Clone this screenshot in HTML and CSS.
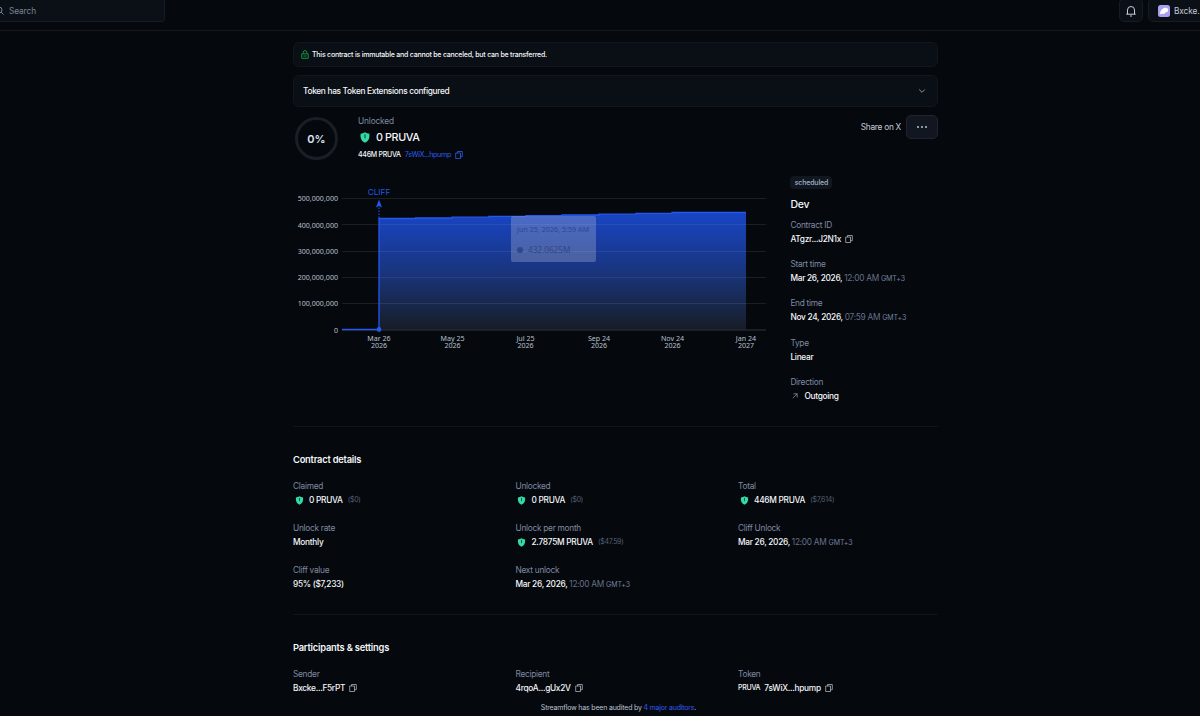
FILE: index.html
```html
<!DOCTYPE html>
<html lang="en">

<head>
    <meta charset="UTF-8">
    <meta name="viewport" content="width=device-width, initial-scale=1.0">
    <title>Streamflow - Contract</title>
    <link rel="stylesheet" href="styles.css">
</head>

<body>
    <!-- Shared icons -->
    <svg class="sprite">
        <symbol id="copy" viewBox="0 0 8 8">
            <path d="M2.500 2V.5h4.800v5.200H5.500M.7 2h4.800v5.500H.7z" fill="none" stroke="currentColor" stroke-width=".8" stroke-linejoin="round" />
        </symbol>
        <symbol id="token" viewBox="0 0 10 11">
            <path d="M5 .3C6.200 1.200 7.800 1.600 9.400 1.700 9.800 5.800 8.800 9 5 10.700 1.200 9 .2 5.800.6 1.700 2.200 1.600 3.800 1.200 5 .3z" fill="#35d9a5" />
            <path d="M5 2.300v4" fill="none" stroke="#0b5a48" stroke-width="1.200" />
        </symbol>
    </svg>

    <header class="topbar">
        <div class="search">
            <svg class="search-icon" viewBox="0 0 9 9"><circle cx="4" cy="4" r="3" /><path d="M6.200 6.200 8.500 8.500" /></svg>
            <span>Search</span>
        </div>
        <div class="topbar-right">
            <div class="bell">
                <svg viewBox="0 0 12 12"><path d="M1.300 9.200h9.400M2.500 9V5a3.500 3.500 0 0 1 7 0v4M5 11h2" /></svg>
            </div>
            <div class="wallet">
                <svg viewBox="0 0 12 12"><rect width="12" height="12" rx="2.500" fill="#ab9ff2" /><path d="M2 8.300C2.500 5 5 2.700 7.500 2.700c1.800 0 2.800 1.200 2.600 2.600C9.900 7 8.600 7.600 7.300 7.500 6.500 9 4.800 9.700 4.300 8.500 3.500 9.300 2 9.500 2 8.300z" fill="#fff" /></svg>
                <span>Bxcke...</span>
            </div>
        </div>
    </header>

    <main>
        <div class="notice">
            <svg viewBox="0 0 8 9"><path d="M.8 3.800h6.400v4.500H.8zM2.200 3.600V2.400a1.800 1.800 0 0 1 3.600 0v1.200M2.500 6h3" /></svg>
            <span>This contract is immutable and cannot be canceled, but can be transferred.</span>
        </div>
        <div class="accordion">
            <span>Token has Token Extensions configured</span>
            <svg viewBox="0 0 8 6"><path d="M1.200 1.500 4 4.300 6.800 1.500" /></svg>
        </div>

        <section class="summary">
            <div class="ring">0%</div>
            <div class="summary-text">
                <div class="label">Unlocked</div>
                <div class="amount"><svg><use href="#token" /></svg>0 PRUVA</div>
                <div class="supply"><span>446M PRUVA</span><a class="link">7sWiX...hpump</a><svg class="copy link"><use href="#copy" /></svg></div>
            </div>
            <div class="share">Share on X</div>
            <div class="more"><i></i><i></i><i></i></div>
        </section>

        <section class="overview">
            <div class="chart">
                <svg width="485" height="175" viewBox="293 180 485 175">
                    <defs>
                        <linearGradient id="area" x1="0" y1="0" x2="0" y2="1">
                            <stop offset="0" stop-color="#1845c4" />
                            <stop offset=".5" stop-color="#19357f" />
                            <stop offset="1" stop-color="#171d27" />
                        </linearGradient>
                    </defs>
                    <path d="M379 218.500H415.500V218H452V217.200H489V216.400H526V215.700H562V215H599V214.200H636V213.400H672V212.500H746V329.500H379z" fill="url(#area)" />
                    <path class="grid" d="M342 198.500H766M342 224.500H766M342 251.500H766M342 277.500H766M342 303.500H766" />
                    <path class="axis" d="M342 330H766" />
                    <path class="line" d="M342 329.500H379V218.500H415.500V218H452V217.200H489V216.400H526V215.700H562V215H599V214.200H636V213.400H672V212.500H746" />
                    <path class="cliff" d="M379 218V206" />
                    <path d="M379 199.500 382 207.500 379 206 376 207.500z" fill="#2458ee" />
                    <circle cx="379" cy="329.500" r="2.400" fill="#2458ee" />
                    <text class="cliff-label" x="379" y="195">CLIFF</text>
                    <g class="y-labels">
                        <text x="338" y="201.200">500,000,000</text>
                        <text x="338" y="227.700">400,000,000</text>
                        <text x="338" y="253.900">300,000,000</text>
                        <text x="338" y="280.100">200,000,000</text>
                        <text x="338" y="306.300">100,000,000</text>
                        <text x="338" y="332.500">0</text>
                    </g>
                    <g class="x-labels">
                        <text x="379" y="341">Mar 26</text><text x="379" y="347.500">2026</text>
                        <text x="452.500" y="341">May 25</text><text x="452.500" y="347.500">2026</text>
                        <text x="525.500" y="341">Jul 25</text><text x="525.500" y="347.500">2026</text>
                        <text x="599" y="341">Sep 24</text><text x="599" y="347.500">2026</text>
                        <text x="672.500" y="341">Nov 24</text><text x="672.500" y="347.500">2026</text>
                        <text x="746" y="341">Jan 24</text><text x="746" y="347.500">2027</text>
                    </g>
                </svg>
                <div class="tooltip">
                    <div>Jun 25, 2026, 5:59 AM</div>
                    <div class="tooltip-value"><i></i>432.0625M</div>
                </div>
            </div>
            <aside>
                <span class="badge">scheduled</span>
                <h1>Dev</h1>
                <div class="field"><div class="label">Contract ID</div><div class="value">ATgzr...J2N1x<svg class="copy"><use href="#copy" /></svg></div></div>
                <div class="field"><div class="label">Start time</div><div class="value">Mar 26, 2026, <span class="time">12:00 AM <small>GMT+3</small></span></div></div>
                <div class="field"><div class="label">End time</div><div class="value">Nov 24, 2026, <span class="time">07:59 AM <small>GMT+3</small></span></div></div>
                <div class="field"><div class="label">Type</div><div class="value">Linear</div></div>
                <div class="field"><div class="label">Direction</div><div class="value"><svg class="arrow" viewBox="0 0 6 6"><path d="M.8 5.200 5.200.8M1.500.8h3.700v3.700" /></svg>Outgoing</div></div>
            </aside>
        </section>

        <section class="details">
            <h2>Contract details</h2>
            <div class="grid-3">
                <div><div class="label">Claimed</div><div class="value"><svg class="token"><use href="#token" /></svg>0 PRUVA<span class="usd">($0)</span></div></div>
                <div><div class="label">Unlocked</div><div class="value"><svg class="token"><use href="#token" /></svg>0 PRUVA<span class="usd">($0)</span></div></div>
                <div><div class="label">Total</div><div class="value"><svg class="token"><use href="#token" /></svg>446M PRUVA<span class="usd">($7,614)</span></div></div>
                <div><div class="label">Unlock rate</div><div class="value">Monthly</div></div>
                <div><div class="label">Unlock per month</div><div class="value"><svg class="token"><use href="#token" /></svg>2.7875M PRUVA<span class="usd">($47.59)</span></div></div>
                <div><div class="label">Cliff Unlock</div><div class="value">Mar 26, 2026, <span class="time">12:00 AM <small>GMT+3</small></span></div></div>
                <div><div class="label">Cliff value</div><div class="value">95% ($7,233)</div></div>
                <div><div class="label">Next unlock</div><div class="value">Mar 26, 2026, <span class="time">12:00 AM <small>GMT+3</small></span></div></div>
            </div>
        </section>

        <section class="details participants">
            <h2>Participants &amp; settings</h2>
            <div class="grid-3">
                <div><div class="label">Sender</div><div class="value">Bxcke...F5rPT<svg class="copy"><use href="#copy" /></svg></div></div>
                <div><div class="label">Recipient</div><div class="value">4rqoA...gUx2V<svg class="copy"><use href="#copy" /></svg></div></div>
                <div><div class="label">Token</div><div class="value"><span class="symbol">PRUVA</span>7sWiX...hpump<svg class="copy"><use href="#copy" /></svg></div></div>
            </div>
        </section>
    </main>

    <footer>Streamflow has been audited by <a class="link">4 major auditors</a>.</footer>
</body>

</html>
```
FILE: styles.css
```css
* {
    box-sizing: border-box;
}

body {
    margin: 0;
    height: 716px;
    overflow: hidden;
    display: flex;
    flex-direction: column;
    background: #05080c;
    color: #f4f6fa;
    font-family: Inter, sans-serif;
    font-size: 8.3px;
    letter-spacing: -.27px;
    line-height: 14px;
}

h1, h2 {
    margin: 0;
}

.sprite {
    display: none;
}

.topbar {
    flex: none;
    height: 31px;
    border-bottom: 1px solid #15191f;
    display: flex;
    justify-content: space-between;
    align-items: flex-start;
    overflow: hidden;
}

.search {
    width: 171px;
    height: 26px;
    margin: -4px 0 0 -6px;
    padding: 3px 0 0;
    display: flex;
    align-items: center;
    gap: 5px;
    background: #0b0f16;
    border: 1px solid #171c24;
    border-radius: 3px;
    color: #7c8595;
    letter-spacing: -.1px;
}

.search-icon {
    width: 9px;
    height: 9px;
}

.search-icon, .bell svg, .notice svg, .accordion svg, .arrow {
    fill: none;
    stroke: currentColor;
}

.topbar-right {
    display: flex;
    gap: 5px;
    margin: -2px -30px 0 0;
}

.bell, .wallet {
    height: 24px;
    display: flex;
    align-items: center;
    background: #0b0f16;
    border: 1px solid #171b23;
    border-radius: 5px;
}

.bell {
    width: 24px;
    justify-content: center;
    color: #c9cfdb;
}

.bell svg, .wallet svg {
    width: 12px;
    height: 12px;
}

.bell, .wallet {
    padding-top: 1px;
}

.wallet {
    width: 82px;
    padding-left: 9px;
    gap: 4px;
    color: #c3c9d6;
    letter-spacing: -.1px;
}

.wallet svg {
    flex: none;
}

main {
    width: 645px;
    margin: 11px 0 0 293px;
}

.notice, .accordion {
    display: flex;
    align-items: center;
    background: #0a0e15;
    border: 1px solid #12171e;
    border-radius: 6px;
}

.notice {
    height: 25px;
    padding-left: 7px;
    gap: 3px;
    font-size: 7px;
    font-weight: 500;
    letter-spacing: -.22px;
}

.notice svg {
    width: 8px;
    height: 9px;
    color: #12933f;
}

.accordion {
    height: 32px;
    margin-top: 8px;
    padding: 0 11px 0 9px;
    justify-content: space-between;
    font-weight: 500;
    letter-spacing: -.31px;
}

.accordion svg {
    width: 8px;
    height: 6px;
    color: #8d94a3;
}

.summary {
    display: flex;
    height: 45px;
    margin-top: 8px;
}

.ring {
    width: 43px;
    height: 43px;
    margin: 2px 0 0 2px;
    border: 3px solid #1a1e27;
    border-radius: 50%;
    display: flex;
    align-items: center;
    justify-content: center;
    font-size: 11px;
    font-weight: 600;
    letter-spacing: 0;
    color: #dfe4f2;
}

.summary-text {
    margin: -1px 0 0 20px;
    flex: 1;
}

.label {
    color: #7f8aa3;
    height: 14px;
}

.summary-text .label {
    letter-spacing: -.15px;
}

.amount {
    height: 19px;
    display: flex;
    align-items: center;
    gap: 7px;
    padding-left: 2px;
    font-size: 10.800px;
    font-weight: 500;
    letter-spacing: -.4px;
}

.amount svg {
    width: 10px;
    height: 11px;
    margin-right: -1px;
}

.supply {
    display: flex;
    align-items: center;
    height: 16px;
    font-size: 7px;
    font-weight: 500;
    gap: 4px;
}

.supply a {
    font-size: 7.200px;
    font-weight: 400;
    letter-spacing: -.36px;
}

.link {
    color: #2d5df0;
}

.copy {
    width: 8px;
    height: 8px;
    color: #a9b1c2;
}

.copy.link {
    color: #2d5df0;
}

.value .copy {
    margin-left: 4px;
}

.share {
    margin: 5px 5px 0 0;
    color: #c5ccdc;
}

.more {
    width: 32px;
    height: 24px;
    display: flex;
    align-items: center;
    justify-content: center;
    gap: 2px;
    background: #121620;
    border: 1px solid #1f242e;
    border-radius: 5px;
}

.more i {
    width: 2px;
    height: 2px;
    border-radius: 50%;
    background: #b9c0cf;
}

.overview {
    display: flex;
    height: 267px;
    border-bottom: 1px solid #11151b;
}

.chart {
    position: relative;
    width: 497px;
    padding-top: 20px;
    letter-spacing: 0;
}

.chart > svg {
    display: block;
}

.grid {
    stroke: #8c96aa;
    stroke-opacity: .16;
}

.axis {
    stroke: #30353e;
}

.line {
    fill: none;
    stroke: #2458ee;
    stroke-width: 1.3;
}

.cliff {
    stroke: #2458ee;
    stroke-dasharray: 1.5 1.5;
}

.cliff-label {
    fill: #2458ee;
    font-size: 8.200px;
    text-anchor: middle;
}

.y-labels, .x-labels {
    font-family: "Noto Sans", sans-serif;
    font-size: 7.100px;
    fill: #b8c0d0;
}

.y-labels {
    text-anchor: end;
}

.x-labels {
    text-anchor: middle;
}

.tooltip {
    position: absolute;
    left: 218px;
    top: 56px;
    width: 85px;
    height: 46px;
    padding: 6px;
    border-radius: 2px;
    background: rgba(190, 195, 215, .3);
    color: #334688;
    font-family: "Noto Sans", sans-serif;
    font-size: 7.200px;
    white-space: nowrap;
}

.tooltip-value {
    display: flex;
    align-items: center;
    gap: 5px;
    margin-top: 7px;
    font-size: 8.200px;
}

.tooltip-value i {
    width: 6px;
    height: 6px;
    border-radius: 50%;
    background: #334688;
}

aside {
    padding: 16px 0 0 .4px;
}

.badge {
    display: block;
    width: 42px;
    height: 13px;
    line-height: 13px;
    text-align: center;
    font-size: 7px;
    font-weight: 500;
    letter-spacing: -.15px;
    color: #a4b2c6;
    background: #10171f;
    border-radius: 4px;
}

h1 {
    margin: 9px 0 6px;
    font-size: 10.500px;
    font-weight: 500;
    line-height: 14px;
}

.field {
    height: 39.2px;
}

.value {
    display: flex;
    align-items: center;
    height: 14px;
    font-weight: 500;
    white-space: pre;
}

.time {
    font-weight: 400;
    color: #65718a;
}

.time small {
    font-size: 7px;
    letter-spacing: -.1px;
    color: #7782a0;
}

.arrow {
    width: 6px;
    height: 6px;
    margin: 0 6px 0 2px;
    stroke-width: .8;
    color: #8790a2;
}

.details {
    height: 188px;
    padding-top: 26px;
    border-bottom: 1px solid #11151b;
}

h2 {
    font-size: 9.300px;
    font-weight: 600;
    line-height: 14px;
    letter-spacing: -.2px;
    margin-bottom: 12px;
}

.grid-3 {
    display: grid;
    grid-template-columns: repeat(3, 222.500px);
    row-gap: 14px;
}

.token {
    width: 9px;
    height: 9px;
    margin: 0 5.500px 0 1.500px;
}

.usd {
    margin-left: 5px;
    font-size: 7px;
    font-weight: 400;
    color: #566077;
}

.symbol {
    margin-right: 4px;
    font-size: 7px;
}

.participants {
    height: 86px;
    border: 0;
}

footer {
    width: 1200px;
    padding-left: 37px;
    text-align: center;
    font-size: 7px;
    letter-spacing: -.19px;
    color: #bcc4d4;
}
```
